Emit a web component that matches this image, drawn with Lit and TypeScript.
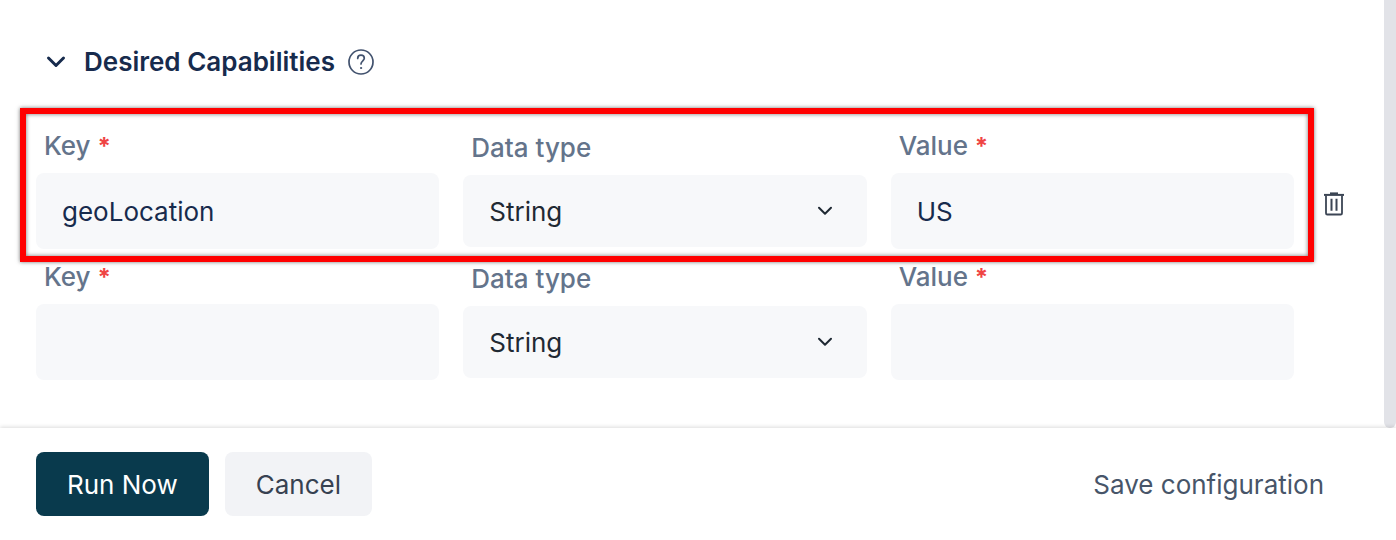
import { LitElement, html, css, nothing } from "lit";
import { customElement, property, state } from "lit/decorators.js";

interface Capability {
  key: string;
  type: string;
  value: string;
  highlighted?: boolean;
}

@customElement("capability-row")
class CapabilityRow extends LitElement {
  @property({ attribute: false }) capability!: Capability;
  @property({ type: Number }) index = 0;

  static styles = css`
    :host {
      display: block;
    }
    .row {
      position: relative;
      display: grid;
      grid-template-columns: minmax(0, 1fr) 40px;
      column-gap: 20px;
      align-items: center;
    }
    .fields {
      position: relative;
      display: grid;
      grid-template-columns: repeat(3, minmax(0, 1fr));
      column-gap: 24px;
      align-items: center;
    }
    .field {
      display: flex;
      flex-direction: column;
      gap: 12px;
    }
    .label {
      padding-left: 8px;
      font-size: 26px;
      line-height: 30px;
      font-weight: 500;
      color: #64748b;
    }
    .required {
      font-weight: 700;
      font-size: 24px;
      line-height: 1;
      color: #ef4444;
    }
    .input,
    .select {
      box-sizing: border-box;
      width: 100%;
      padding: 0 26px;
      border: 0;
      border-radius: 8px;
      outline-color: #093a4d;
      background: #f7f8fa;
      font: inherit;
      font-size: 26px;
    }
    .input {
      height: 76px;
      color: #172b4d;
    }
    .select-wrap {
      position: relative;
    }
    .select {
      display: block;
      height: 72px;
      appearance: none;
      color: #1f2933;
    }
    .arrow {
      position: absolute;
      right: 34px;
      top: 28px;
      width: 16px;
      height: 16px;
      pointer-events: none;
    }
    .outline {
      position: absolute;
      inset: -23px -20px -13px -16px;
      border: 6px solid #ff0000;
      box-shadow:
        0 0 4px rgba(0, 0, 0, 0.55),
        inset 0 0 4px rgba(0, 0, 0, 0.55);
      pointer-events: none;
    }
    .remove {
      display: flex;
      align-items: center;
      justify-content: center;
      width: 40px;
      height: 40px;
      margin-top: 28px;
      padding: 0;
      border: 0;
      background: none;
      color: #3b4554;
      cursor: pointer;
    }
  `;

  render() {
    const { key, type, value, highlighted } = this.capability;
    const n = this.index;
    return html`
      <div class="row">
        <div class="fields">
          <div class="field">
            <label class="label" for="key-${n}">Key <span class="required">*</span></label>
            <input class="input" id="key-${n}" type="text" required .value=${key} />
          </div>
          <div class="field">
            <label class="label" for="type-${n}">Data type</label>
            <div class="select-wrap">
              <select class="select" id="type-${n}">
                <option>${type}</option>
              </select>
              <svg class="arrow" viewBox="0 0 16 16" fill="none" stroke="#1f2933" stroke-width="2" stroke-linecap="round" stroke-linejoin="round" aria-hidden="true">
                <path d="M2 4.8 8 10.8 14 4.8" />
              </svg>
            </div>
          </div>
          <div class="field">
            <label class="label" for="value-${n}">Value <span class="required">*</span></label>
            <input class="input" id="value-${n}" type="text" required .value=${value} />
          </div>
          ${highlighted ? html`<div class="outline"></div>` : nothing}
        </div>
        ${highlighted
          ? html`<button class="remove" type="button" aria-label="Delete">
              <svg width="20" height="24" viewBox="0 0 20 24" fill="none" stroke="currentColor" aria-hidden="true">
                <path d="M6 1.200h8" stroke-width="1.600" />
                <path d="M0 2.900h20" stroke-width="2" />
                <path d="M2 3.500V21.200q0 1.300 1.300 1.300h13.400Q18 22.500 18 21.200V3.500" stroke-width="1.800" />
                <path d="M7.500 6.700v12M12.500 6.700v12" stroke-width="2" />
              </svg>
            </button>`
          : nothing}
      </div>
    `;
  }
}

@customElement("app-root")
class AppRoot extends LitElement {
  @state() private capabilities: Capability[] = [
    { key: "geoLocation", type: "String", value: "US", highlighted: true },
    { key: "", type: "String", value: "" },
  ];

  static styles = css`
    :host {
      display: flex;
      flex-direction: column;
      min-height: 100vh;
      background: #ffffff;
      font-family: Inter, "Liberation Sans", sans-serif;
      font-size: 26px;
    }
    .body {
      display: flex;
      flex: 1;
    }
    .content {
      flex: 1;
      min-width: 0;
      padding: 46px 30px 48px 36px;
    }
    .track {
      width: 12px;
      border-radius: 0 0 6px 6px;
      background: #e2e3e8;
    }
    .header {
      display: flex;
      align-items: center;
      gap: 12px;
      padding-left: 10px;
    }
    .toggle {
      display: flex;
      align-items: center;
      gap: 18px;
      padding: 0;
      border: 0;
      background: none;
      color: #172b4d;
      font: inherit;
      font-weight: 600;
      line-height: 32px;
      cursor: pointer;
    }
    .help {
      display: flex;
      padding: 0;
      border: 0;
      background: none;
      color: #42526e;
      cursor: pointer;
    }
    .rows {
      display: flex;
      flex-direction: column;
      gap: 13px;
      margin-top: 53px;
    }
    .footer {
      position: relative;
      display: flex;
      align-items: center;
      gap: 16px;
      padding: 24px 36px;
      background: #ffffff;
      box-shadow: 0 -1px 4px rgba(0, 0, 0, 0.14);
    }
    .button {
      height: 64px;
      padding: 0 31px;
      border: 0;
      border-radius: 8px;
      background: #f2f3f6;
      color: #374151;
      font: inherit;
      cursor: pointer;
    }
    .primary {
      background: #093a4d;
      color: #ffffff;
    }
    .save {
      margin-left: auto;
      padding: 0 36px;
      background: none;
      color: #475569;
    }
  `;

  render() {
    return html`
      <div class="body">
        <main class="content">
          <div class="header">
            <button class="toggle" type="button" aria-expanded="true">
              <svg width="20" height="20" viewBox="0 0 20 20" fill="none" stroke="currentColor" stroke-width="3" stroke-linecap="round" stroke-linejoin="round" aria-hidden="true">
                <path d="M2.500 6 10 13.500l7.500-7.500" />
              </svg>
              Desired Capabilities
            </button>
            <button class="help" type="button" aria-label="Help">
              <svg width="28" height="28" viewBox="0 0 28 28" fill="none" stroke="currentColor" stroke-width="1.700" stroke-linecap="round" stroke-linejoin="round" aria-hidden="true">
                <circle cx="14" cy="14" r="12" />
                <path d="M10.700 10.500q0-3.300 3.300-3.300t3.300 3.100c0 2.400-3.300 2.700-3.300 5.700" />
                <circle cx="14" cy="20" r=".6" fill="currentColor" stroke-width="1" />
              </svg>
            </button>
          </div>
          <div class="rows">
            ${this.capabilities.map(
              (c, i) => html`<capability-row .capability=${c} .index=${i}></capability-row>`
            )}
          </div>
        </main>
        <div class="track"></div>
      </div>
      <footer class="footer">
        <button class="button primary" type="button">Run Now</button>
        <button class="button" type="button">Cancel</button>
        <button class="button save" type="button">Save configuration</button>
      </footer>
    `;
  }
}
